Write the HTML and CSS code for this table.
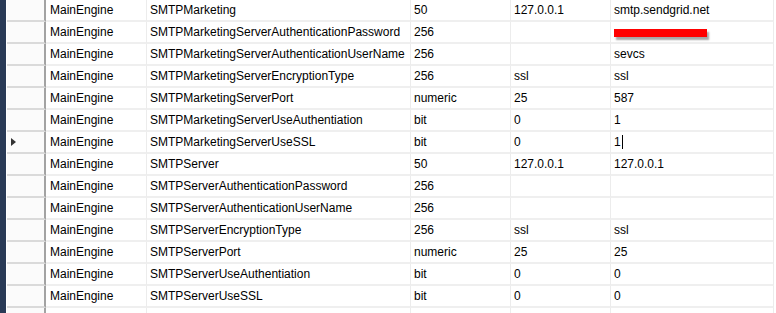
FILE: index.html
```html
<!DOCTYPE html>
<html lang="en">
<head>
    <meta charset="UTF-8">
    <title>Settings grid</title>
    <link rel="stylesheet" href="styles.css">
</head>
<body>
    <div class="frame">
        <div class="side-strip"></div>
        <div class="grid">
            <div class="row">
                <div class="row-head"></div>
                <div class="cell c1">MainEngine</div>
                <div class="cell c2">SMTPMarketing</div>
                <div class="cell c3">50</div>
                <div class="cell c4">127.0.0.1</div>
                <div class="cell c5">smtp.sendgrid.net</div>
            </div>
            <div class="row">
                <div class="row-head"></div>
                <div class="cell c1">MainEngine</div>
                <div class="cell c2">SMTPMarketingServerAuthenticationPassword</div>
                <div class="cell c3">256</div>
                <div class="cell c4"></div>
                <div class="cell c5"><span class="redacted"></span></div>
            </div>
            <div class="row">
                <div class="row-head"></div>
                <div class="cell c1">MainEngine</div>
                <div class="cell c2">SMTPMarketingServerAuthenticationUserName</div>
                <div class="cell c3">256</div>
                <div class="cell c4"></div>
                <div class="cell c5">sevcs</div>
            </div>
            <div class="row">
                <div class="row-head"></div>
                <div class="cell c1">MainEngine</div>
                <div class="cell c2">SMTPMarketingServerEncryptionType</div>
                <div class="cell c3">256</div>
                <div class="cell c4">ssl</div>
                <div class="cell c5">ssl</div>
            </div>
            <div class="row">
                <div class="row-head"></div>
                <div class="cell c1">MainEngine</div>
                <div class="cell c2">SMTPMarketingServerPort</div>
                <div class="cell c3">numeric</div>
                <div class="cell c4">25</div>
                <div class="cell c5">587</div>
            </div>
            <div class="row">
                <div class="row-head"></div>
                <div class="cell c1">MainEngine</div>
                <div class="cell c2">SMTPMarketingServerUseAuthentiation</div>
                <div class="cell c3">bit</div>
                <div class="cell c4">0</div>
                <div class="cell c5">1</div>
            </div>
            <div class="row current">
                <div class="row-head"><span class="arrow"></span></div>
                <div class="cell c1">MainEngine</div>
                <div class="cell c2">SMTPMarketingServerUseSSL</div>
                <div class="cell c3">bit</div>
                <div class="cell c4">0</div>
                <div class="cell c5">1<span class="caret"></span></div>
            </div>
            <div class="row">
                <div class="row-head"></div>
                <div class="cell c1">MainEngine</div>
                <div class="cell c2">SMTPServer</div>
                <div class="cell c3">50</div>
                <div class="cell c4">127.0.0.1</div>
                <div class="cell c5">127.0.0.1</div>
            </div>
            <div class="row">
                <div class="row-head"></div>
                <div class="cell c1">MainEngine</div>
                <div class="cell c2">SMTPServerAuthenticationPassword</div>
                <div class="cell c3">256</div>
                <div class="cell c4"></div>
                <div class="cell c5"></div>
            </div>
            <div class="row">
                <div class="row-head"></div>
                <div class="cell c1">MainEngine</div>
                <div class="cell c2">SMTPServerAuthenticationUserName</div>
                <div class="cell c3">256</div>
                <div class="cell c4"></div>
                <div class="cell c5"></div>
            </div>
            <div class="row">
                <div class="row-head"></div>
                <div class="cell c1">MainEngine</div>
                <div class="cell c2">SMTPServerEncryptionType</div>
                <div class="cell c3">256</div>
                <div class="cell c4">ssl</div>
                <div class="cell c5">ssl</div>
            </div>
            <div class="row">
                <div class="row-head"></div>
                <div class="cell c1">MainEngine</div>
                <div class="cell c2">SMTPServerPort</div>
                <div class="cell c3">numeric</div>
                <div class="cell c4">25</div>
                <div class="cell c5">25</div>
            </div>
            <div class="row">
                <div class="row-head"></div>
                <div class="cell c1">MainEngine</div>
                <div class="cell c2">SMTPServerUseAuthentiation</div>
                <div class="cell c3">bit</div>
                <div class="cell c4">0</div>
                <div class="cell c5">0</div>
            </div>
            <div class="row">
                <div class="row-head"></div>
                <div class="cell c1">MainEngine</div>
                <div class="cell c2">SMTPServerUseSSL</div>
                <div class="cell c3">bit</div>
                <div class="cell c4">0</div>
                <div class="cell c5">0</div>
            </div>
            <div class="row">
                <div class="row-head"></div>
                <div class="cell c1"></div>
                <div class="cell c2"></div>
                <div class="cell c3"></div>
                <div class="cell c4"></div>
                <div class="cell c5"></div>
            </div>
        </div>
    </div>
</body>
</html>
```

FILE: styles.css
```css
body {
    margin: 0;
    background-color: #ffffff;
    font-family: "Liberation Sans", Arial, sans-serif;
    font-size: 12px;
    color: #000000;
    height: 313px;
    overflow: hidden;
}

.frame {
    display: flex;
    height: 313px;
    overflow: hidden;
}

.side-strip {
    width: 6px;
    flex-shrink: 0;
    background-color: #293a56;
}

.grid {
    display: flex;
    flex-direction: column;
    flex: 1;
    overflow: hidden;
}

.row {
    display: flex;
    height: 22px;
    flex-shrink: 0;
    box-sizing: border-box;
}

.row-head {
    width: 39px;
    flex-shrink: 0;
    box-sizing: border-box;
    margin-left: 1px;
    background-color: #fbfbfb;
    border-bottom: 2px solid #dadada;
    border-right: 2px solid #a3a3a3;
    display: flex;
    align-items: center;
    padding-left: 4px;
}

.cell {
    box-sizing: border-box;
    flex-shrink: 0;
    border-right: 1px solid #ececec;
    border-bottom: 2px solid #efefef;
    padding: 1px 0 0 3px;
    line-height: 19px;
    white-space: nowrap;
    overflow: hidden;
    position: relative;
}

.c1 { width: 101px; padding-left: 4px; }
.c2 { width: 264px; }
.c3 { width: 100px; }
.c4 { width: 100px; }
.c5 { width: 163px; }

.arrow {
    width: 0;
    height: 0;
    border-top: 4px solid transparent;
    border-bottom: 4px solid transparent;
    border-left: 5px solid #333333;
}

.caret {
    display: inline-block;
    width: 1px;
    height: 14px;
    background-color: #000000;
    vertical-align: -3px;
    margin-left: 1px;
}

.redacted {
    display: inline-block;
    width: 93px;
    height: 8px;
    margin-top: 6px;
    background-color: #ff0000;
    box-shadow: 2px 3px 2px rgba(0, 0, 0, 0.35);
    vertical-align: top;
}
```
